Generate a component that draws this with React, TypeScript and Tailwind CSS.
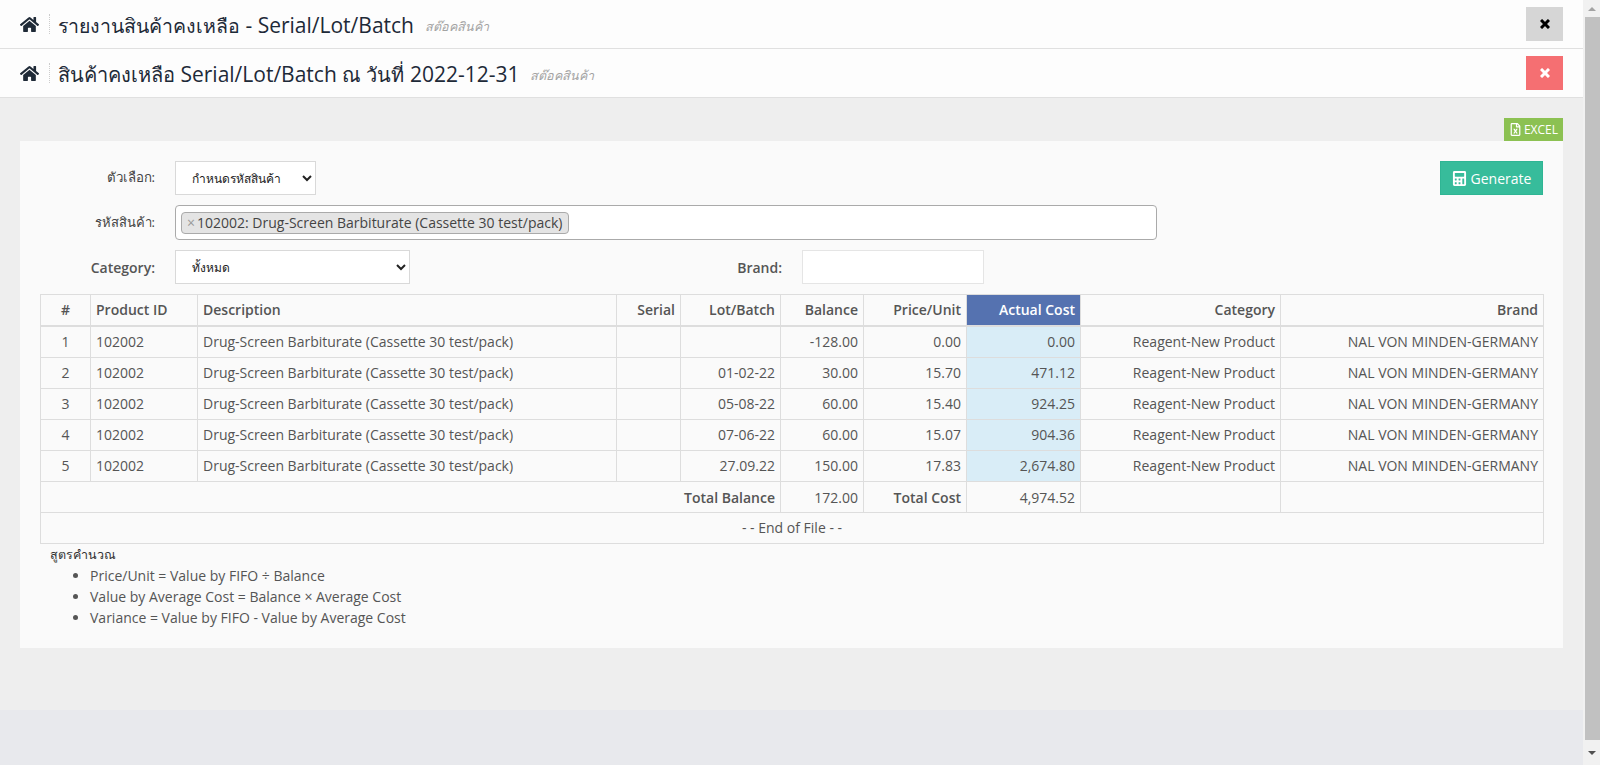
import type { ReactNode } from "react"
import { FaHome, FaRegFileExcel, FaCalculator } from "react-icons/fa"

const rows = [
  { n: 1, lot: "", balance: "-128.00", price: "0.00", cost: "0.00" },
  { n: 2, lot: "01-02-22", balance: "30.00", price: "15.70", cost: "471.12" },
  { n: 3, lot: "05-08-22", balance: "60.00", price: "15.40", cost: "924.25" },
  { n: 4, lot: "07-06-22", balance: "60.00", price: "15.07", cost: "904.36" },
  { n: 5, lot: "27.09.22", balance: "150.00", price: "17.83", cost: "2,674.80" },
]

const th = "h-[31px] border border-[#ddd] border-b-2 px-[5px] py-0 font-semibold"
const td = "h-[31px] border border-[#ddd] px-[5px] py-0 font-normal"

function TitleBar({ children, closeClass }: { children: ReactNode; closeClass: string }) {
  return (
    <div className="flex h-[49px] items-center border-b border-[#e0e0e0] bg-[#fdfdfd] px-5">
      <FaHome className="h-[17px] w-[19px] text-[#1f2a37]" />
      <div className="ml-[10px] mr-2 h-5 border-l border-dotted border-[#ccc]" />
      <h1 className="pt-[3px] text-[21px] leading-7 font-normal text-[#1e2a38]">{children}</h1>
      <span className="ml-[11px] pt-[6px] text-[12.5px] text-[#a3a3a3] italic">สต๊อคสินค้า</span>
      <button className={`ml-auto flex h-[34px] w-[37px] items-center justify-center ${closeClass}`}>
        <svg viewBox="0 0 10 10" className="h-[10px] w-[10px]" stroke="currentColor" strokeWidth="3">
          <path d="M1 1 9 9M9 1 1 9" />
        </svg>
      </button>
    </div>
  )
}

export default function App() {
  return (
    <div className="flex h-[765px] overflow-hidden bg-[#e8e9ed] font-['Open_Sans','Noto_Sans',sans-serif] text-[14px] text-[#555]">
      <div className="flex min-w-0 flex-1 flex-col">
        <TitleBar closeClass="bg-[#d6d6d6] text-black">
          <span className="text-[19.5px]">รายงานสินค้าคงเหลือ</span> - Serial/Lot/Batch
        </TitleBar>
        <TitleBar closeClass="bg-[#f56f72] text-white">
          <span className="text-[20px]">สินค้าคงเหลือ</span> Serial/Lot/Batch <span className="text-[20px]">ณ วันที่</span> 2022-12-31
        </TitleBar>

        <div className="h-[612px] bg-[#eeeeee] px-5 pt-[20px]">
          <div className="flex justify-end">
            <button className="flex h-[23px] w-[59px] items-center justify-center gap-[2px] bg-[#8cc152] text-[12px] text-white">
              <FaRegFileExcel className="h-[13px] w-[13px]" />
              EXCEL
            </button>
          </div>

          <div className="h-[507px] bg-[#fafafa] px-5 pt-[20px]">
            <div className="flex h-[34px] items-center">
              <label className="w-[115px] text-right text-[13.25px] text-[#444]">ตัวเลือก:</label>
              <select className="ml-5 h-[34px] w-[141px] border border-[#d9d9d9] bg-white pl-[12px] text-[12px] text-[#222]">
                <option>กำหนดรหัสสินค้า</option>
              </select>
              <button className="ml-auto flex h-[34px] w-[103px] items-center justify-center gap-[4px] border border-[#2fb594] bg-[#37bc9b] text-[14px] text-white">
                <FaCalculator className="h-[15px] w-[15px]" />
                Generate
              </button>
            </div>

            <div className="mt-[10px] flex h-[35px] items-center">
              <label className="w-[115px] text-right text-[13px] text-[#444]">รหัสสินค้า:</label>
              <div className="ml-5 flex h-[35px] w-[982px] items-center rounded border border-[#aaa] bg-white pl-[5px]">
                <span className="flex h-[22px] w-[388px] items-center rounded border border-[#aaa] bg-[#e4e4e4] pl-[5px] text-[14px] text-[#444] whitespace-nowrap">
                  <span className="mr-[2px] text-[#999]">×</span>
                  102002: Drug-Screen Barbiturate (Cassette 30 test/pack)
                </span>
              </div>
            </div>

            <div className="mt-[10px] flex h-[34px] items-center">
              <label className="w-[115px] text-right text-[14px] font-semibold">Category:</label>
              <select className="ml-5 h-[34px] w-[235px] border border-[#d9d9d9] bg-white pl-[12px] text-[12px] text-[#222]">
                <option>ทั้งหมด</option>
              </select>
              <label className="ml-[300px] w-[72px] text-right text-[14px] font-semibold">Brand:</label>
              <input className="ml-5 h-[34px] w-[182px] border border-[#e5e5e5] bg-white" />
            </div>

            <table className="mt-[10px] w-[1503px] table-fixed border-collapse text-[14px]">
              <colgroup>
                <col className="w-[50px]" />
                <col className="w-[107px]" />
                <col className="w-[419px]" />
                <col className="w-[64px]" />
                <col className="w-[100px]" />
                <col className="w-[83px]" />
                <col className="w-[103px]" />
                <col className="w-[114px]" />
                <col className="w-[200px]" />
                <col className="w-[263px]" />
              </colgroup>
              <thead>
                <tr>
                  <th className={`${th} text-center`}>#</th>
                  <th className={`${th} text-left`}>Product ID</th>
                  <th className={`${th} text-left`}>Description</th>
                  <th className={`${th} text-right`}>Serial</th>
                  <th className={`${th} text-right`}>Lot/Batch</th>
                  <th className={`${th} text-right`}>Balance</th>
                  <th className={`${th} text-right`}>Price/Unit</th>
                  <th className={`${th} bg-[#5572b0] text-right text-white`}>Actual Cost</th>
                  <th className={`${th} text-right`}>Category</th>
                  <th className={`${th} text-right`}>Brand</th>
                </tr>
              </thead>
              <tbody>
                {rows.map((r) => (
                  <tr key={r.n} className={r.n === 1 ? "h-[32px]" : "[&>td]:pb-[2px]"}>
                    <td className={`${td} text-center`}>{r.n}</td>
                    <td className={td}>102002</td>
                    <td className={`${td} whitespace-nowrap`}>Drug-Screen Barbiturate (Cassette 30 test/pack)</td>
                    <td className={td}></td>
                    <td className={`${td} text-right`}>{r.lot}</td>
                    <td className={`${td} text-right`}>{r.balance}</td>
                    <td className={`${td} text-right`}>{r.price}</td>
                    <td className={`${td} bg-[#d9edf7] text-right`}>{r.cost}</td>
                    <td className={`${td} text-right`}>Reagent-New Product</td>
                    <td className={`${td} text-right`}>NAL VON MINDEN-GERMANY</td>
                  </tr>
                ))}
                <tr>
                  <td colSpan={5} className={`${td} text-right font-semibold`}>Total Balance</td>
                  <td className={`${td} text-right`}>172.00</td>
                  <td className={`${td} text-right font-semibold`}>Total Cost</td>
                  <td className={`${td} text-right`}>4,974.52</td>
                  <td className={td}></td>
                  <td className={td}></td>
                </tr>
                <tr className="[&>td]:pb-[2px]">
                  <td colSpan={10} className={`${td} text-center`}>- - End of File - -</td>
                </tr>
              </tbody>
            </table>

            <div className="pl-[10px] leading-[21px] text-[#555]">
              <p className="h-[21px] text-[12.5px] text-[#333]">สูตรคำนวณ</p>
              <ul className="list-disc pl-10">
                <li>Price/Unit = Value by FIFO ÷ Balance</li>
                <li>Value by Average Cost = Balance × Average Cost</li>
                <li>Variance = Value by FIFO - Value by Average Cost</li>
              </ul>
            </div>
          </div>
        </div>
      </div>

      <div className="flex w-[17px] flex-col items-center bg-[#f1f1f1]">
        <div className="flex h-[17px] items-center justify-center">
          <div className="h-0 w-0 border-x-4 border-b-4 border-x-transparent border-b-[#a3a3a3]" />
        </div>
        <div className="ml-[2px] h-[723px] w-[15px] bg-[#c1c1c1]" />
        <div className="flex flex-1 items-center justify-center">
          <div className="h-0 w-0 border-x-4 border-t-4 border-x-transparent border-t-[#505050]" />
        </div>
      </div>
    </div>
  )
}
